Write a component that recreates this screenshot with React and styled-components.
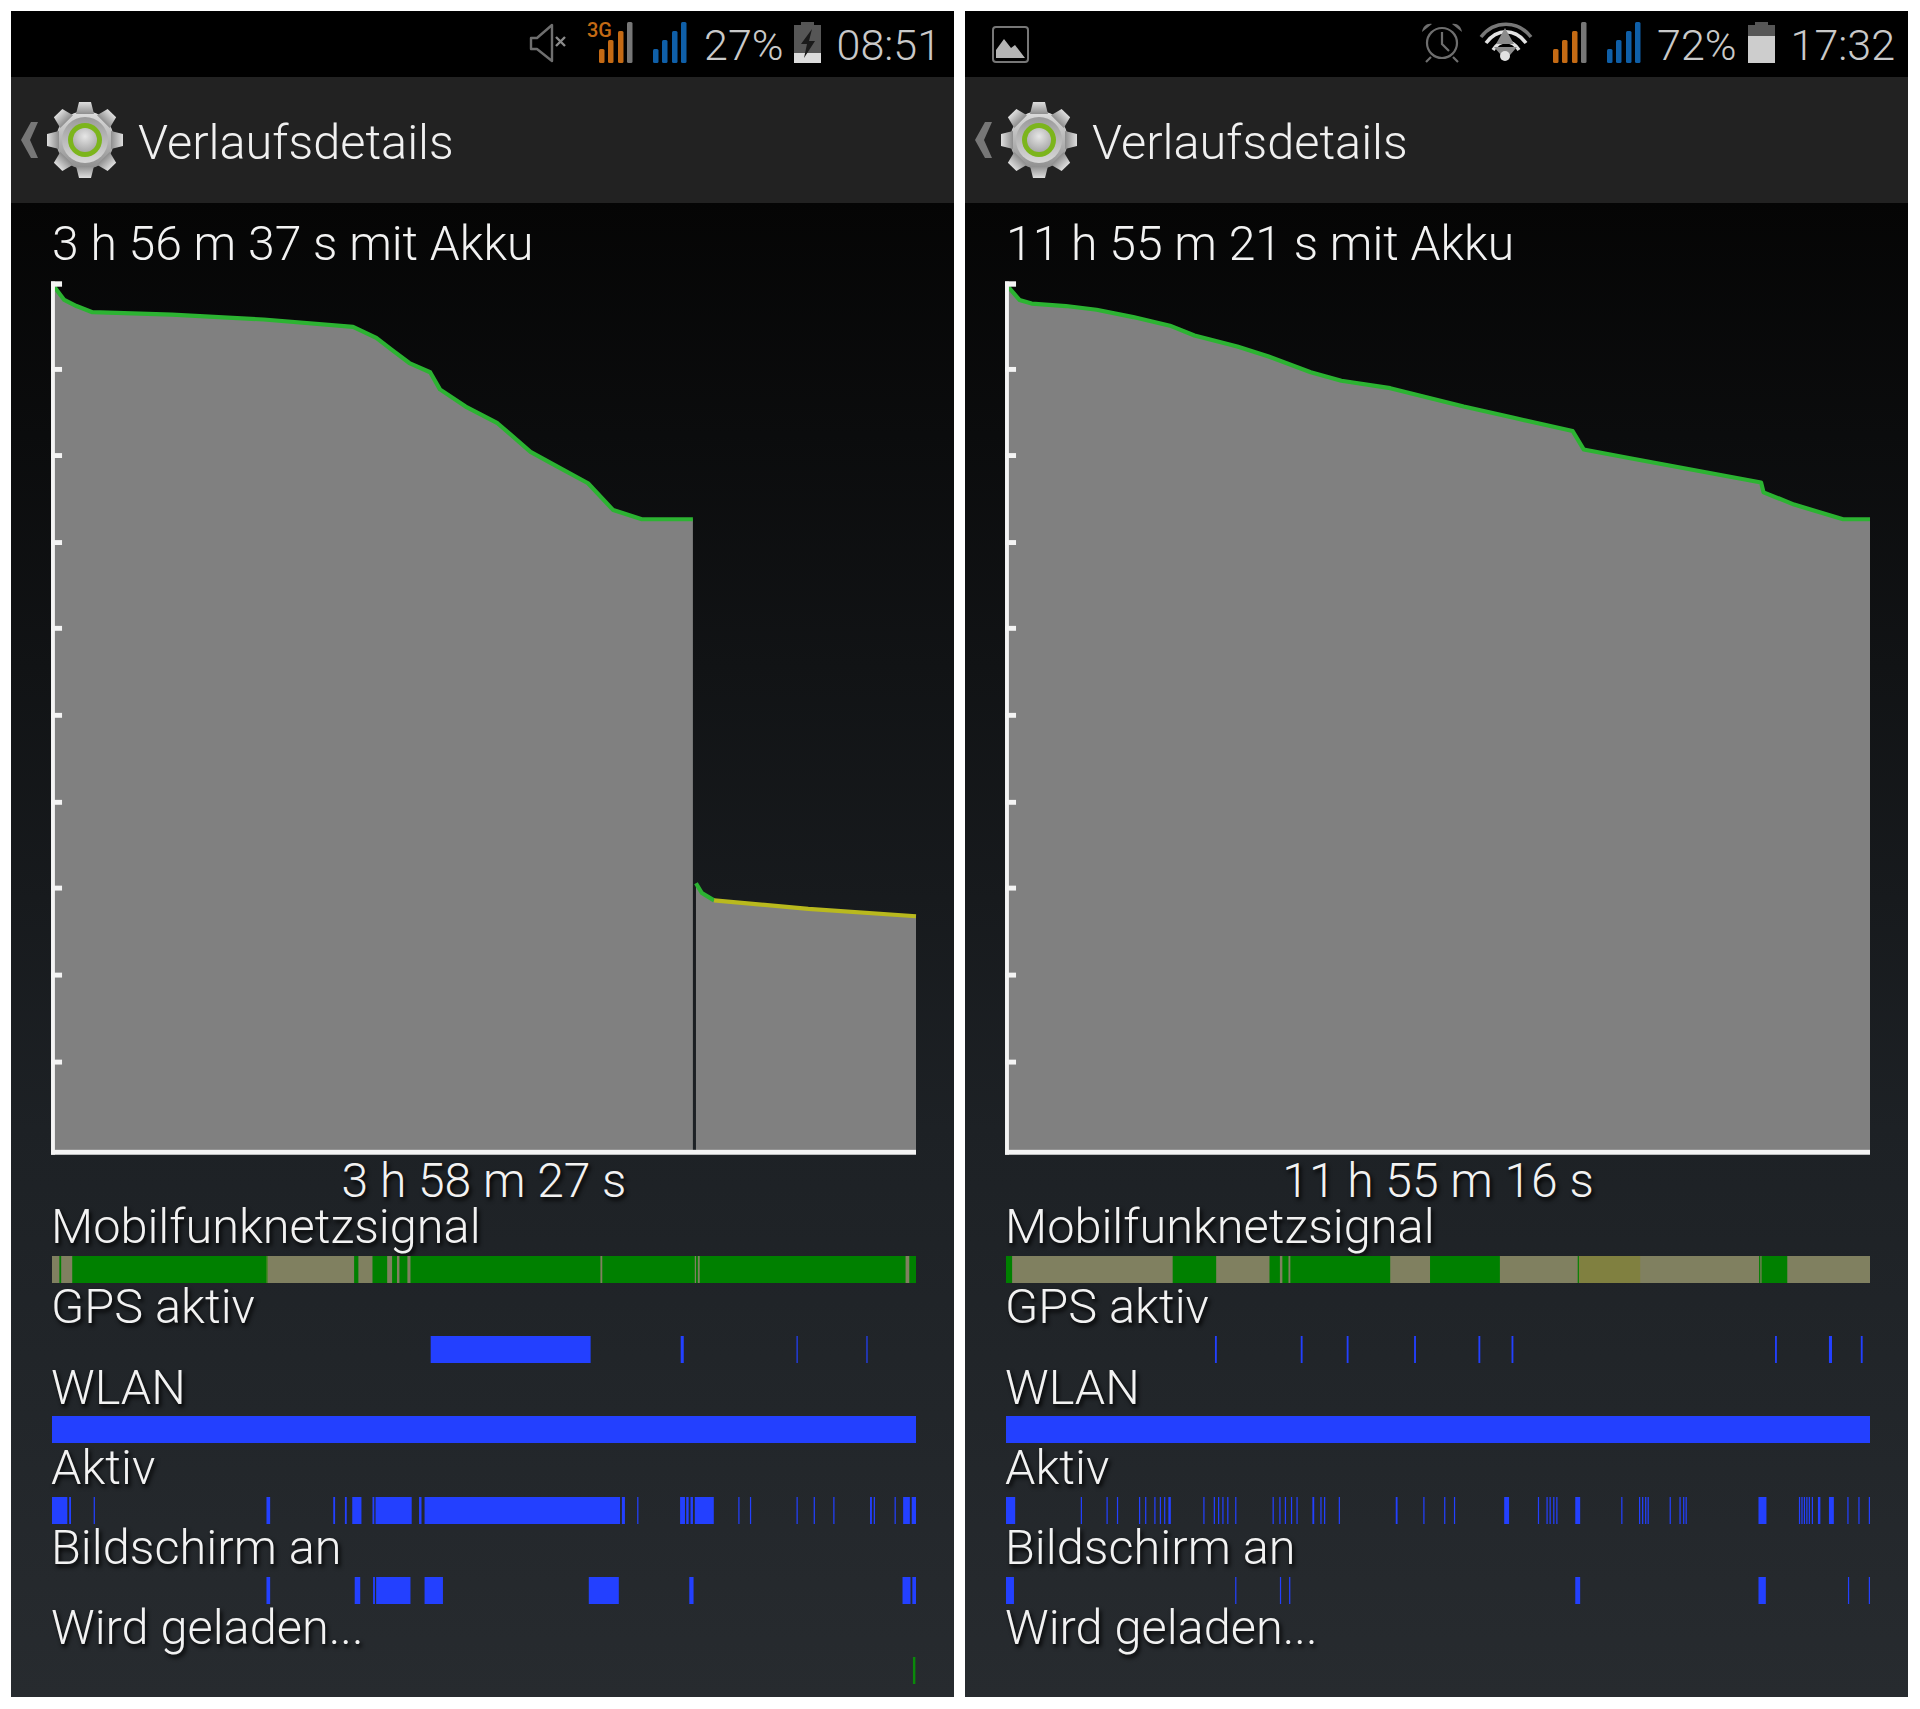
import React from 'react';
import styled, { createGlobalStyle } from 'styled-components';

const GlobalStyle = createGlobalStyle`
  html, body {
    margin: 0;
    background: #fff;
  }
  * {
    box-sizing: border-box;
  }
`;

const Page = styled.div`
  width: 1920px;
  height: 1709px;
  padding: 11px 12px 12px 11px;
  display: grid;
  grid-template-columns: 943px 943px;
  column-gap: 11px;
  font-family: Roboto, "Liberation Sans", sans-serif;
`;

const Phone = styled.section`
  height: 1686px;
  display: flex;
  flex-direction: column;
  background: #000;
`;

const StatusBar = styled.header`
  height: 66px;
  padding: 0 13px 3px 27px;
  display: flex;
  align-items: center;
  justify-content: space-between;
  background: #000;
`;

const StatusLeft = styled.div`
  padding-top: 7px;
`;

const StatusGroup = styled.div`
  display: flex;
  align-items: center;
`;

const StatusSlot = styled.span`
  display: block;
  margin-left: ${p => p.$left || 0}px;

  svg {
    display: block;
    overflow: visible;
  }
`;

const StatusText = styled.span`
  display: block;
  margin-left: ${p => p.$left || 0}px;
  font-size: 43px;
  font-weight: 300;
  line-height: 60px;
  color: #c9c9c9;
  padding-top: 5px;
`;

const ActionBar = styled.div`
  height: 126px;
  padding-left: 10px;
  display: flex;
  align-items: center;
  background: #222;
`;

const GearSlot = styled.div`
  margin-left: 8px;
  display: flex;
`;

const Title = styled.h1`
  margin: 6px 0 0 15px;
  font-size: 48.7px;
  font-weight: 300;
  line-height: 48px;
  color: #f0f0f0;
`;

const Body = styled.main`
  flex: 1;
  padding: 17px 38px 0 41px;
  background: linear-gradient(180deg, #050505 0%, #1d2125 62%, #272b2f 100%);
  color: #f2f2f2;
`;

const Summary = styled.div`
  height: 48px;
  margin-bottom: 16px;
  font-size: 48.1px;
  font-weight: 300;
  line-height: 48px;
`;

const ChartSvg = styled.svg`
  display: block;
  width: 864px;
  height: 870px;
  overflow: visible;
`;

const Duration = styled.div`
  height: 44px;
  margin-top: 5px;
  font-size: 48px;
  font-weight: 300;
  line-height: 44px;
  text-align: center;
  text-shadow: 2px 3px 4px #000;
`;

const Row = styled.div`
  height: 80.3px;
`;

const RowLabel = styled.div`
  height: 52.8px;
  margin-left: -1px;
  font-size: 48.7px;
  font-weight: 300;
  line-height: 48px;
  white-space: nowrap;
  text-shadow: 2px 3px 4px #000;
`;

const StripSvg = styled.svg`
  display: block;
  width: 864px;
  height: 27px;
`;

const BLUE = '#2340ff';
const GREEN = '#008000';
const KHAKI = '#808060';
const OLIVE = '#808040';

const TICKS = [301.7, 372, 443, 513, 584, 655, 725, 796, 867];
const STRIP_WIDTH = 1410;

// curve points in the shrunk screenshot's units, x from the phone's left edge
const LEFT_CURVE = [
  [44, 234.5], [52, 245], [62, 250], [75, 255], [140, 257], [215, 261], [288, 267], [307, 276],
  [320, 286], [334, 296.5], [351, 304], [359, 318], [380, 332], [406, 345.6], [433, 369],
  [455, 381], [480, 394.6], [500.6, 416.5], [524, 424], [565.7, 424],
];
const LEFT_TAIL_GREEN = [[568.2, 721], [573, 729], [583, 735]];
const LEFT_TAIL_YELLOW = [[583, 735], [660, 742], [748, 748]];
const RIGHT_CURVE = [
  [44, 234.5], [53, 245], [63, 248], [91, 250], [116, 253], [146, 259], [176, 266], [196, 274],
  [231, 283], [256, 291], [291, 304], [316, 311], [356, 317], [416, 332], [456, 341],
  [505, 352], [514, 367], [551, 374], [659, 394], [661, 402], [686, 412], [726, 424], [748, 424],
];

const line = pts => pts.map(p => p.join(',')).join(' ');

const Area = ({ pts }) => {
  const first = pts[0];
  const last = pts[pts.length - 1];
  return <polygon fill="#808080" points={`${first[0]},940 ${line(pts)} ${last[0]},940`} />;
};

const Stroke = ({ pts, color = '#2cb332' }) => (
  <polyline fill="none" stroke={color} strokeWidth="3.4" strokeLinejoin="round" points={line(pts)} />
);

const Axes = () => (
  <g fill="#f4f4f4">
    <rect x="41.2" y="230" width="3.2" height="712.5" />
    <rect x="41.2" y="229.8" width="9" height="4.4" />
    <rect x="41.2" y="938.6" width="706.8" height="4" />
    {TICKS.map(y => <rect key={y} x="41.2" y={y - 2} width="9" height="4" />)}
  </g>
);

const BatteryChart = ({ children }) => (
  <ChartSvg viewBox="42 232 706 710" preserveAspectRatio="none">
    {children}
    <Axes />
  </ChartSvg>
);

// segments are [start, end, colour] measured on a 1410-wide strip
const Strip = ({ segments, base, color = BLUE }) => (
  <StripSvg viewBox={`0 0 ${STRIP_WIDTH} 27`} preserveAspectRatio="none">
    {base && <rect width={STRIP_WIDTH} height="27" fill={base} />}
    {segments.map(([a, b, c], i) => (
      <rect key={i} x={a} width={b - a} height="27" fill={c || color} />
    ))}
  </StripSvg>
);

const shift = (list, by) => list.map(([a, b, c]) => [a - by, b - by, c]);

const LEFT_ROWS = [
  {
    label: 'Mobilfunknetzsignal',
    base: GREEN,
    segments: shift([[85, 97, KHAKI], [100, 118, KHAKI], [435, 437, '#5f8a30'], [437, 578, KHAKI], [585, 608, KHAKI], [632, 640, KHAKI], [648, 652, KHAKI], [665, 670, KHAKI], [980, 983, KHAKI], [1134, 1136, KHAKI], [1139, 1142, KHAKI], [1478, 1484, KHAKI]], 85),
  },
  { label: 'GPS aktiv', segments: shift([[703, 964], [1111, 1116], [1300, 1302], [1414, 1416]], 85) },
  { label: 'WLAN', segments: [[0, 1410]] },
  {
    label: 'Aktiv',
    segments: shift([[85, 110], [113, 116], [153, 155], [435, 441], [544, 547], [563, 566], [575, 590], [608, 611], [613, 672], [684, 688], [693, 1012], [1015, 1020], [1040, 1042], [1110, 1118], [1120, 1124], [1127, 1131], [1134, 1165], [1205, 1207], [1224, 1226], [1300, 1302], [1328, 1330], [1360, 1362], [1420, 1423], [1426, 1428], [1460, 1462], [1474, 1485], [1488, 1495]], 85),
  },
  { label: 'Bildschirm an', segments: shift([[435, 441], [579, 588], [609, 612], [614, 670], [693, 723], [961, 1010], [1125, 1132], [1473, 1486], [1489, 1495]], 85) },
  { label: 'Wird geladen...', color: '#0a8a0a', segments: shift([[1490, 1494]], 85) },
];

const RIGHT_ROWS = [
  {
    label: 'Mobilfunknetzsignal',
    base: KHAKI,
    segments: shift([[75, 85, GREEN], [347, 418, GREEN], [505, 522, GREEN], [526, 536, GREEN], [539, 702, GREEN], [767, 881, GREEN], [1008, 1010, GREEN], [1010, 1110, OLIVE], [1304, 1306, GREEN], [1308, 1350, GREEN]], 75),
  },
  { label: 'GPS aktiv', segments: shift([[416, 419], [556, 559], [631, 634], [741, 744], [846, 849], [900, 903], [1330, 1333], [1418, 1423], [1470, 1473]], 75) },
  { label: 'WLAN', segments: [[0, 1410]] },
  {
    label: 'Aktiv',
    segments: shift([[75, 90], [197, 199], [239, 241], [256, 258], [292, 294], [302, 304], [317, 319], [326, 328], [333, 335], [340, 344], [397, 399], [414, 416], [421, 423], [428, 430], [436, 438], [449, 451], [510, 512], [521, 523], [530, 532], [540, 542], [549, 551], [575, 578], [588, 590], [594, 596], [618, 620], [711, 714], [756, 758], [790, 792], [806, 808], [888, 896], [943, 945], [957, 959], [962, 964], [968, 970], [973, 975], [1004, 1012], [1079, 1081], [1108, 1110], [1113, 1115], [1118, 1120], [1122, 1124], [1158, 1160], [1174, 1176], [1180, 1182], [1184, 1186], [1303, 1316], [1369, 1371], [1373, 1375], [1377, 1379], [1381, 1383], [1385, 1387], [1390, 1392], [1400, 1404], [1418, 1426], [1448, 1450], [1466, 1468], [1483, 1485]], 75),
  },
  { label: 'Bildschirm an', segments: shift([[75, 88], [449, 451], [522, 524], [537, 539], [1004, 1012], [1303, 1315], [1449, 1451], [1483, 1485]], 75) },
  { label: 'Wird geladen...', segments: [] },
];

const Signal = ({ color, last = color, network }) => {
  const bars = [[0, 14], [9, 23], [19, 32], [28, 41]];
  return (
    <svg width="33" height="41" viewBox="0 0 33 41">
      {bars.map(([x, h], i) => (
        <rect key={x} x={x} y={41 - h} width="5.5" height={h} rx="1.5" fill={i === 3 ? last : color} />
      ))}
      {network}
    </svg>
  );
};

const Muted = () => (
  <svg width="36" height="38" viewBox="0 0 36 38" fill="none" stroke="#6f6f6f" strokeWidth="2.4">
    <path d="M1 14h6L22 1v36L7 25H1z" strokeLinejoin="round" />
    <path d="M26 13l9 9M35 13l-9 9" stroke="#8a8a8a" />
  </svg>
);

const ChargingBattery = () => (
  <svg width="27" height="41" viewBox="0 0 27 41">
    <rect x="7" y="0" width="13" height="4" fill="#555" />
    <rect x="0" y="3" width="27" height="28" fill="#565656" />
    <rect x="0" y="31" width="27" height="10" fill="#dcdcdc" />
    <path d="M18 7L7 22h6l-3 14 11-17h-6z" fill="#1a1a1a" />
  </svg>
);

const Battery = () => (
  <svg width="27" height="41" viewBox="0 0 27 41">
    <rect x="7" y="0" width="13" height="4" fill="#555" />
    <rect x="0" y="3" width="27" height="11" fill="#565656" />
    <rect x="0" y="14" width="27" height="27" fill="#cdcdcd" />
  </svg>
);

const Alarm = () => (
  <svg width="42" height="40" viewBox="0 0 42 40" fill="none" stroke="#6e6e6e" strokeWidth="2.2">
    <circle cx="21" cy="20" r="15" />
    <path d="M21 9v12l7 7" />
    <path d="M10 34l-5 5M32 34l5 5" />
    <path d="M1 9C2 3 6 0 11 1zM41 9C40 3 36 0 31 1z" fill="#6e6e6e" stroke="none" />
  </svg>
);

const Wifi = () => (
  <svg width="52" height="39" viewBox="0 0 52 39" fill="none">
    <path d="M1 14C14 -3 38 -3 51 14" stroke="#777" strokeWidth="3.5" />
    <path d="M6 20C17 5 35 5 46 20" stroke="#e2e2e2" strokeWidth="3.5" />
    <path d="M13 27C20 16 32 16 39 27" stroke="#e2e2e2" strokeWidth="3.5" />
    <path d="M25 5l9 16H16z" fill="#8b8b8b" />
    <path d="M14 24h23l-7 8h-9z" fill="#8b8b8b" />
    <circle cx="25" cy="33" r="5" fill="#e2e2e2" />
  </svg>
);

const PictureIcon = () => (
  <svg width="37" height="37" viewBox="0 0 37 37">
    <rect x="1" y="1" width="35" height="35" rx="3" fill="none" stroke="#777" strokeWidth="2" />
    <path d="M4 32V24l8-11 7 9 4-3 10 13z" fill="#b5b5b5" />
  </svg>
);

const GEAR_TEETH = [0, 45, 90, 135, 180, 225, 270, 315];

const Gear = ({ id }) => (
  <svg width="76" height="80" viewBox="-38 -40 76 80">
    <defs>
      <linearGradient id={`${id}-body`} x1="0" y1="0" x2="0" y2="1">
        <stop offset="0" stopColor="#dedede" />
        <stop offset="1" stopColor="#8e8e8e" />
      </linearGradient>
      <linearGradient id={`${id}-bevel`} x1="0" y1="0" x2="0" y2="1">
        <stop offset="0" stopColor="#9a9a9a" />
        <stop offset="1" stopColor="#d8d8d8" />
      </linearGradient>
      <radialGradient id={`${id}-core`} cx="0.5" cy="0.35" r="0.7">
        <stop offset="0" stopColor="#e6e6e6" />
        <stop offset="1" stopColor="#a3a3a3" />
      </radialGradient>
    </defs>
    <g fill={`url(#${id}-body)`}>
      <circle r="29" />
      {GEAR_TEETH.map(a => (
        <path key={a} d="M-9 -26 L-6 -38 L6 -38 L9 -26 Z" transform={`rotate(${a})`} />
      ))}
    </g>
    <circle r="23" fill={`url(#${id}-bevel)`} />
    <circle r="17" fill="#7cb51c" />
    <circle r="12" fill={`url(#${id}-core)`} />
  </svg>
);

const Back = () => (
  <svg width="18" height="36" viewBox="0 0 18 36">
    <path d="M17 0h-7L0 18l10 18h7L9 18z" fill="#777" />
  </svg>
);

const ORANGE = '#c46a14';
const SIGNAL_BLUE = '#0f5fa8';

const Network3G = (
  <text x="-12" y="15" fontFamily="Roboto, sans-serif" fontSize="20" fontWeight="500" fill={ORANGE}>3G</text>
);

const Screen = ({ statusLeft, status, summary, chart, duration, rows, id }) => (
  <Phone>
    <StatusBar>
      <StatusLeft>{statusLeft}</StatusLeft>
      <StatusGroup>{status}</StatusGroup>
    </StatusBar>
    <ActionBar>
      <Back />
      <GearSlot>
        <Gear id={id} />
      </GearSlot>
      <Title>Verlaufsdetails</Title>
    </ActionBar>
    <Body>
      <Summary>{summary}</Summary>
      <BatteryChart>{chart}</BatteryChart>
      <Duration>{duration}</Duration>
      {rows.map(r => (
        <Row key={r.label}>
          <RowLabel>{r.label}</RowLabel>
          <Strip segments={r.segments} base={r.base} color={r.color} />
        </Row>
      ))}
    </Body>
  </Phone>
);

const App = () => (
  <Page>
    <GlobalStyle />
    <Screen
      id="left"
      status={
        <>
          <StatusSlot><Muted /></StatusSlot>
          <StatusSlot $left={33}><Signal color={ORANGE} last="#777" network={Network3G} /></StatusSlot>
          <StatusSlot $left={21}><Signal color={SIGNAL_BLUE} /></StatusSlot>
          <StatusText $left={18}>27%</StatusText>
          <StatusSlot $left={10}><ChargingBattery /></StatusSlot>
          <StatusText $left={16}>08:51</StatusText>
        </>
      }
      summary="3 h 56 m 37 s mit Akku"
      duration="3 h 58 m 27 s"
      rows={LEFT_ROWS}
      chart={
        <>
          <Area pts={LEFT_CURVE} />
          <Area pts={[...LEFT_TAIL_GREEN, ...LEFT_TAIL_YELLOW.slice(1)]} />
          <Stroke pts={LEFT_CURVE} />
          <Stroke pts={LEFT_TAIL_GREEN} />
          <Stroke pts={LEFT_TAIL_YELLOW} color="#b9b91e" />
        </>
      }
    />
    <Screen
      id="right"
      statusLeft={<PictureIcon />}
      status={
        <>
          <StatusSlot><Alarm /></StatusSlot>
          <StatusSlot $left={17}><Wifi /></StatusSlot>
          <StatusSlot $left={21}><Signal color={ORANGE} last="#777" /></StatusSlot>
          <StatusSlot $left={21}><Signal color={SIGNAL_BLUE} /></StatusSlot>
          <StatusText $left={17}>72%</StatusText>
          <StatusSlot $left={11}><Battery /></StatusSlot>
          <StatusText $left={16}>17:32</StatusText>
        </>
      }
      summary="11 h 55 m 21 s mit Akku"
      duration="11 h 55 m 16 s"
      rows={RIGHT_ROWS}
      chart={
        <>
          <Area pts={RIGHT_CURVE} />
          <Stroke pts={RIGHT_CURVE} />
        </>
      }
    />
  </Page>
);

export default App;
